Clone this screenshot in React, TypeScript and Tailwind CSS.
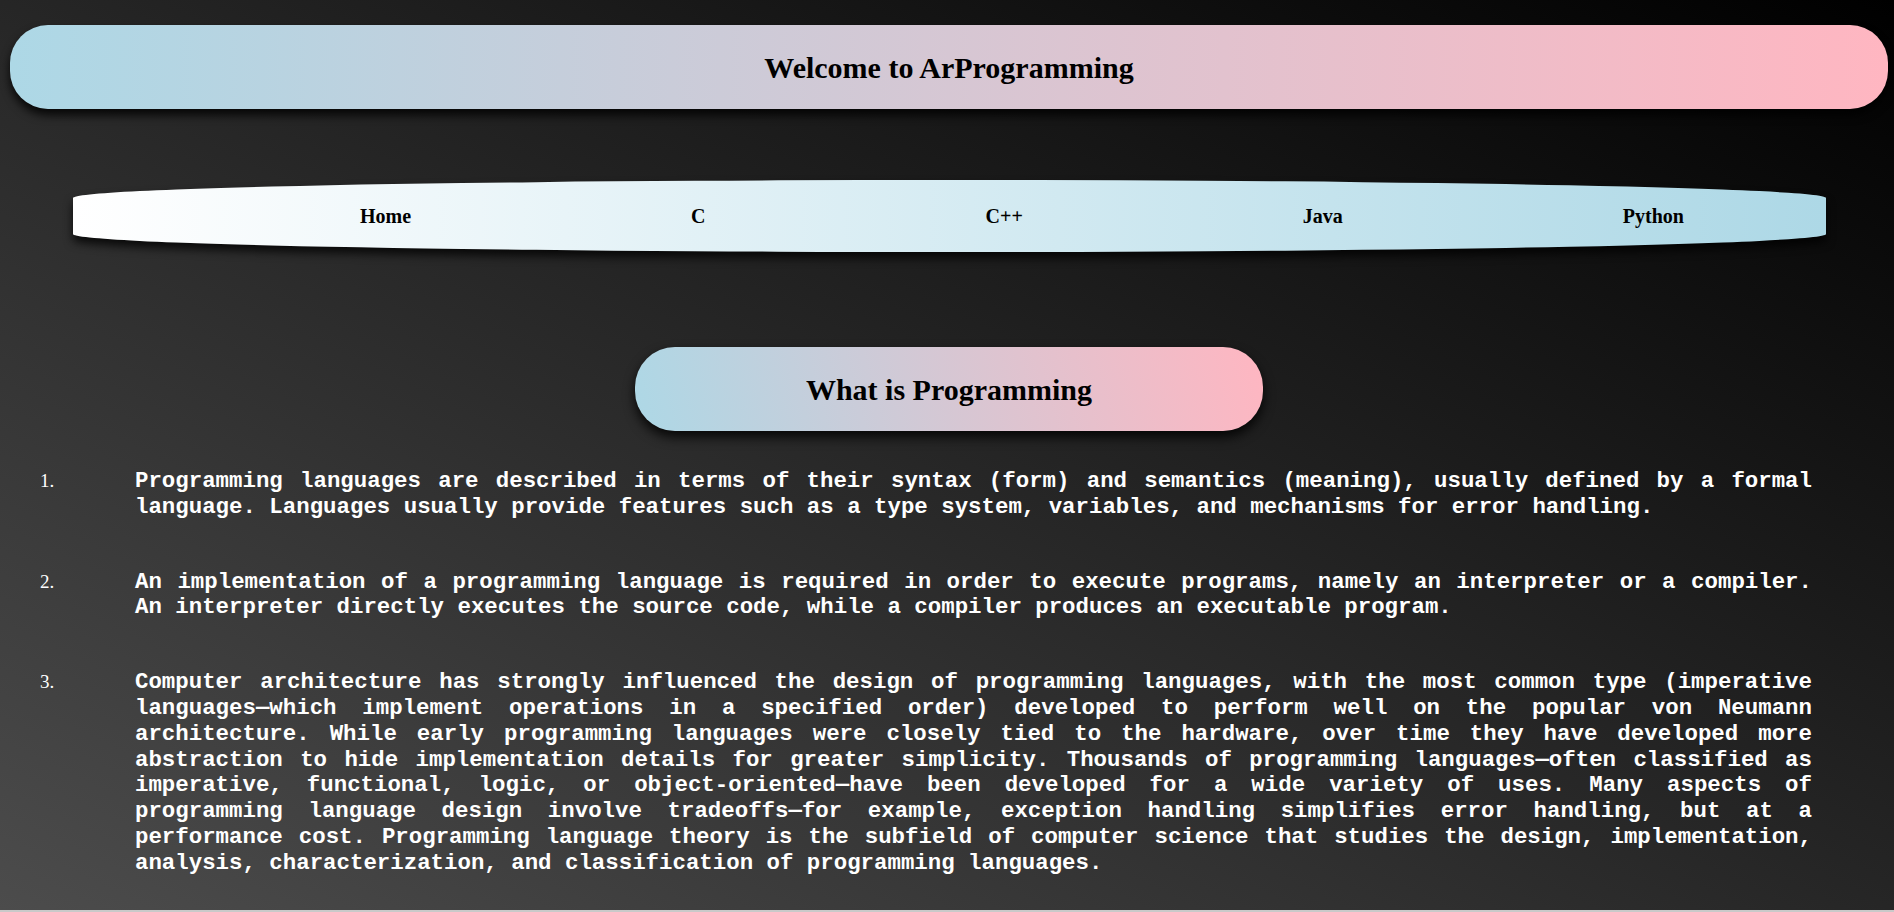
const items = [
  "Programming languages are described in terms of their syntax (form) and semantics (meaning), usually defined by a formal language. Languages usually provide features such as a type system, variables, and mechanisms for error handling.",
  "An implementation of a programming language is required in order to execute programs, namely an interpreter or a compiler. An interpreter directly executes the source code, while a compiler produces an executable program.",
  "Computer architecture has strongly influenced the design of programming languages, with the most common type (imperative languages\u2014which implement operations in a specified order) developed to perform well on the popular von Neumann architecture. While early programming languages were closely tied to the hardware, over time they have developed more abstraction to hide implementation details for greater simplicity. Thousands of programming languages\u2014often classified as imperative, functional, logic, or object-oriented\u2014have been developed for a wide variety of uses. Many aspects of programming language design involve tradeoffs\u2014for example, exception handling simplifies error handling, but at a performance cost. Programming language theory is the subfield of computer science that studies the design, implementation, analysis, characterization, and classification of programming languages.",
];

const links = ["Home", "C", "C++", "Java", "Python"];

export default function App() {
  return (
    <div className="min-h-screen bg-[#c9c9c9]">
      <div className="h-[910px] bg-[linear-gradient(to_top_right,#4c4c4c,#000)] pl-[10px] pr-[6px] pt-[25px] font-['Liberation_Serif',serif]">

        <header className="flex h-[84px] items-center justify-center rounded-[38px] bg-[linear-gradient(to_right,#add8e6,#ffb6c1)] shadow-[0_6px_10px_rgba(0,0,0,0.85)]">
          <h1 className="text-[30px] font-bold text-black">
            Welcome to ArProgramming
          </h1>
        </header>

        <nav className="ml-[63px] mr-[62px] mt-[71px] flex h-[72px] items-center gap-[280px] rounded-[50%/25%] bg-[linear-gradient(to_right,#fff,#add8e6)] pl-[287px] shadow-[0_6px_10px_rgba(0,0,0,0.8)]">
          {links.map((l) => (
            <a key={l} className="text-[20px] font-bold text-black">
              {l}
            </a>
          ))}
        </nav>

        <div className="mx-auto mt-[95px] flex h-[84px] w-[628px] items-center justify-center rounded-[40px] bg-[linear-gradient(75deg,#add8e6,#ffb6c1)] shadow-[0_6px_12px_rgba(0,0,0,0.85)]">
          <h2 className="text-[30px] font-bold text-black">
            What is Programming
          </h2>
        </div>

        <ol className="mt-[36px] flex flex-col gap-[47px] pl-[30px] pr-[76px]">
          {items.map((t, i) => (
            <li key={i} className="flex items-baseline">
              <span className="w-[95px] shrink-0 text-[19px] text-white">
                {i + 1}.
              </span>
              <p className="flex-1 text-justify font-['Liberation_Mono',monospace] text-[22.4px] font-bold leading-[25.8px] text-white">
                {t}
              </p>
            </li>
          ))}
        </ol>

      </div>
    </div>
  );
}
